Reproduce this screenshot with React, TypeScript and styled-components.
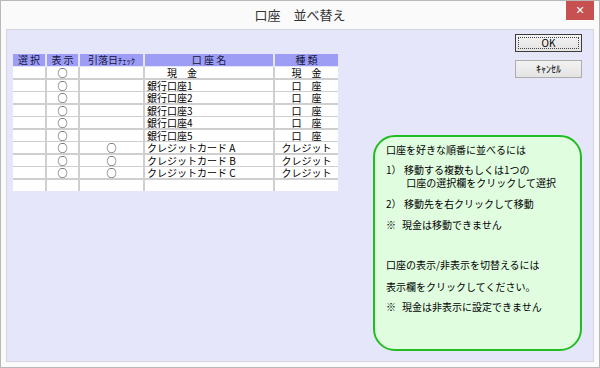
import React from 'react'
import styled, { createGlobalStyle } from 'styled-components'

const GlobalStyle = createGlobalStyle`
	html, body {
		margin: 0;
		padding: 0;
		background: #ffffff;
	}
	body {
		font-family: "Noto Sans CJK JP", "Liberation Sans", sans-serif;
		color: #000;
	}
`

const Window = styled.div`
	width: 600px;
	height: 368px;
	box-sizing: border-box;
	border: 1px solid #b8b8b8;
	background: #fafafa;
	display: flex;
	flex-direction: column;
`

const TitleBar = styled.div`
	height: 28px;
	flex-shrink: 0;
	display: grid;
	grid-template-columns: 1fr auto 1fr;
	align-items: start;
`

const Title = styled.div`
	grid-column: 2;
	font-size: 13px;
	line-height: 28px;
	color: #333;
	white-space: pre;
`

const CloseButton = styled.div`
	grid-column: 3;
	justify-self: end;
	width: 28px;
	height: 19px;
	margin-right: 5px;
	background: #c75050;
	color: #fff;
	font-family: "DejaVu Sans", sans-serif;
	font-size: 11px;
	font-weight: bold;
	line-height: 19px;
	text-align: center;
`

const Panel = styled.div`
	flex: 1;
	margin: 0 5px 5px 5px;
	border: 1px solid #d4d4de;
	background: #e6e6fa;
	display: flex;
	align-items: flex-start;
	padding-left: 6px;
`

const Table = styled.div`
	margin-top: 24px;
	width: 325px;
	display: flex;
	flex-direction: column;
`

const cols = '32px 31px 63px 128px 63px'

const HeaderRow = styled.div`
	display: grid;
	grid-template-columns: ${cols};
	column-gap: 2px;
	height: 11px;
`

const HeaderCell = styled.div`
	background: #9d9df6;
	color: #14143a;
	font-size: 10px;
	line-height: 11px;
	text-align: center;
	white-space: pre;
`

const Small = styled.span`
	font-size: 8.5px;
`

const Body = styled.div`
	margin-top: 2px;
	display: grid;
	grid-template-columns: ${cols};
	grid-auto-rows: 11px;
	gap: 1.5px 2px;
	background: #cfcfcf;
`

const Cell = styled.div<{ $align?: 'left' | 'center' }>`
	background: #fff;
	font-size: 10px;
	line-height: 11px;
	text-align: ${(p) => p.$align || 'center'};
	padding-left: ${(p) => (p.$align === 'left' ? '2px' : '0')};
	white-space: pre;
`

const Mark = styled.span`
	font-size: 10px;
`

const Side = styled.div`
	margin-left: 35px;
	width: 209px;
	padding-top: 4px;
	display: flex;
	flex-direction: column;
	align-items: flex-end;
`

const Button = styled.div<{ $default?: boolean }>`
	width: 67px;
	height: 18px;
	box-sizing: border-box;
	margin-bottom: 8px;
	border: 1px solid ${(p) => (p.$default ? '#3c3c3c' : '#adadad')};
	background: linear-gradient(#f2f2f2, #e4e4e4);
	display: flex;
	padding: 2px;
`

const ButtonLabel = styled.div<{ $focus?: boolean }>`
	flex: 1;
	border: 1px dotted ${(p) => (p.$focus ? '#444' : 'transparent')};
	font-size: 10px;
	line-height: 10px;
	text-align: center;
`

const NoteBox = styled.div`
	align-self: stretch;
	margin-top: 49px;
	height: 216px;
	box-sizing: border-box;
	border: 2.5px solid #22bd22;
	border-radius: 22px;
	background: #e0fde0;
	padding: 6px 0 0 11px;
`

const Line = styled.div<{ $gap?: number; $marker?: number }>`
	margin-top: ${(p) => p.$gap || 0}px;
	display: grid;
	grid-template-columns: ${(p) => (p.$marker ? `${p.$marker}px 1fr` : '1fr')};
	font-size: 10px;
	line-height: 13px;
	white-space: pre;
`

const rows: { show: boolean; check: boolean; name: string; kind: string }[] = [
	{ show: true, check: false, name: '　　現　金', kind: '現　金' },
	{ show: true, check: false, name: '銀行口座1', kind: '口　座' },
	{ show: true, check: false, name: '銀行口座2', kind: '口　座' },
	{ show: true, check: false, name: '銀行口座3', kind: '口　座' },
	{ show: true, check: false, name: '銀行口座4', kind: '口　座' },
	{ show: true, check: false, name: '銀行口座5', kind: '口　座' },
	{ show: true, check: true, name: 'クレジットカード A', kind: 'クレジット' },
	{ show: true, check: true, name: 'クレジットカード B', kind: 'クレジット' },
	{ show: true, check: true, name: 'クレジットカード C', kind: 'クレジット' },
	{ show: false, check: false, name: '', kind: '' },
]

const App: React.FC = () => {
	return (
		<>
			<GlobalStyle />
			<Window>
				<TitleBar>
					<Title>口座　並べ替え</Title>
					<CloseButton>✕</CloseButton>
				</TitleBar>
				<Panel>
					<Table>
						<HeaderRow>
							<HeaderCell>選 択</HeaderCell>
							<HeaderCell>表 示</HeaderCell>
							<HeaderCell>
								引落日<Small>ﾁｪｯｸ</Small>
							</HeaderCell>
							<HeaderCell>口 座 名</HeaderCell>
							<HeaderCell>種 類</HeaderCell>
						</HeaderRow>
						<Body>
							{rows.map((r, i) => (
								<React.Fragment key={i}>
									<Cell />
									<Cell>{r.show && <Mark>○</Mark>}</Cell>
									<Cell>{r.check && <Mark>○</Mark>}</Cell>
									<Cell $align="left">{r.name}</Cell>
									<Cell>{r.kind}</Cell>
								</React.Fragment>
							))}
						</Body>
					</Table>
					<Side>
						<Button $default>
							<ButtonLabel $focus>OK</ButtonLabel>
						</Button>
						<Button>
							<ButtonLabel>ｷｬﾝｾﾙ</ButtonLabel>
						</Button>
						<NoteBox>
							<Line>口座を好きな順番に並べるには</Line>
							<Line $gap={7} $marker={18}>
								<span>1）</span>
								<span>移動する複数もしくは1つの{'\n'} 口座の選択欄をクリックして選択</span>
							</Line>
							<Line $gap={8} $marker={18}>
								<span>2）</span>
								<span>移動先を右クリックして移動</span>
							</Line>
							<Line $gap={8} $marker={16}>
								<span>※</span>
								<span>現金は移動できません</span>
							</Line>
							<Line $gap={27}>口座の表示/非表示を切替えるには</Line>
							<Line $gap={9}>表示欄をクリックしてください。</Line>
							<Line $gap={7} $marker={16}>
								<span>※</span>
								<span>現金は非表示に設定できません</span>
							</Line>
						</NoteBox>
					</Side>
				</Panel>
			</Window>
		</>
	)
}

export default App
